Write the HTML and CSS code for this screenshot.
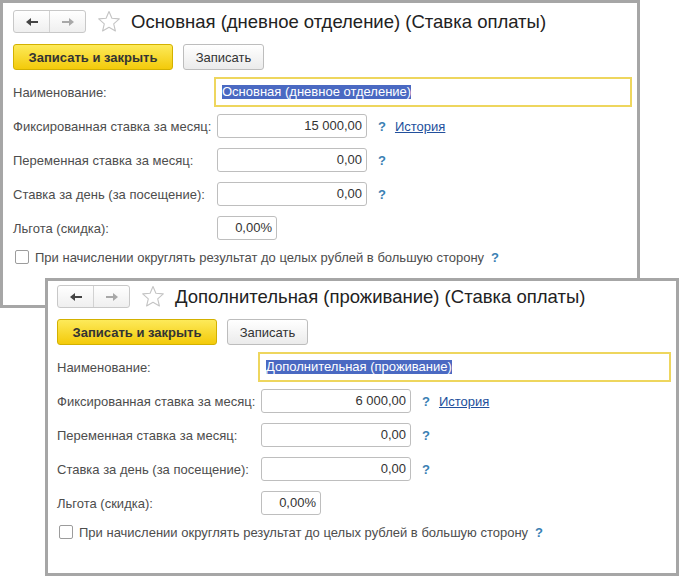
FILE: index.html
```html
<!DOCTYPE html>
<html lang="ru">
<head>
    <meta charset="UTF-8">
    <title>Ставки оплаты</title>
    <link rel="stylesheet" href="styles.css">
</head>
<body>

<div class="desk">

    <!-- Первое окно: основная ставка -->
    <section class="window window-back">
        <div class="head">
            <div class="nav">
                <span class="nav-btn">
                    <svg width="14" height="10" viewBox="0 0 14 10"><path d="M1 5 L6 1 L6 4 L13 4 L13 6 L6 6 L6 9 Z" fill="#444"/></svg>
                </span>
                <span class="nav-btn">
                    <svg width="14" height="10" viewBox="0 0 14 10"><path d="M13 5 L8 1 L8 4 L1 4 L1 6 L8 6 L8 9 Z" fill="#a8a8a8"/></svg>
                </span>
            </div>
            <svg class="star" width="24" height="23" viewBox="0 0 24 23"><path d="M12 1.5 L14.9 8.3 L22.3 8.9 L16.7 13.8 L18.4 21 L12 17.2 L5.6 21 L7.3 13.8 L1.7 8.9 L9.1 8.3 Z" fill="#fff" stroke="#c4c4c4" stroke-width="1.1" stroke-linejoin="round"/></svg>
            <h1 class="title">Основная (дневное отделение) (Ставка оплаты)</h1>
        </div>

        <div class="toolbar">
            <button class="btn btn-main">Записать и закрыть</button>
            <button class="btn">Записать</button>
        </div>

        <div class="row name-row">
            <span class="label">Наименование:</span>
            <div class="name-field"><span class="selected">Основная (дневное отделение)</span></div>
        </div>

        <div class="row rate-row">
            <span class="label">Фиксированная ставка за месяц:</span>
            <div class="num">15 000,00</div>
            <span class="hint">?</span>
            <a class="link" href="#">История</a>
        </div>
        <div class="row rate-row">
            <span class="label">Переменная ставка за месяц:</span>
            <div class="num">0,00</div>
            <span class="hint">?</span>
        </div>
        <div class="row rate-row">
            <span class="label">Ставка за день (за посещение):</span>
            <div class="num">0,00</div>
            <span class="hint">?</span>
        </div>
        <div class="row rate-row">
            <span class="label">Льгота (скидка):</span>
            <div class="num num-short">0,00%</div>
        </div>

        <div class="row check-row">
            <span class="check"></span>
            <span class="check-text">При начислении округлять результат до целых рублей в большую сторону</span>
            <span class="hint">?</span>
        </div>
    </section>

    <!-- Второе окно: дополнительная ставка -->
    <section class="window window-front">
        <div class="head">
            <div class="nav">
                <span class="nav-btn">
                    <svg width="14" height="10" viewBox="0 0 14 10"><path d="M1 5 L6 1 L6 4 L13 4 L13 6 L6 6 L6 9 Z" fill="#444"/></svg>
                </span>
                <span class="nav-btn">
                    <svg width="14" height="10" viewBox="0 0 14 10"><path d="M13 5 L8 1 L8 4 L1 4 L1 6 L8 6 L8 9 Z" fill="#a8a8a8"/></svg>
                </span>
            </div>
            <svg class="star" width="24" height="23" viewBox="0 0 24 23"><path d="M12 1.5 L14.9 8.3 L22.3 8.9 L16.7 13.8 L18.4 21 L12 17.2 L5.6 21 L7.3 13.8 L1.7 8.9 L9.1 8.3 Z" fill="#fff" stroke="#c4c4c4" stroke-width="1.1" stroke-linejoin="round"/></svg>
            <h1 class="title">Дополнительная (проживание) (Ставка оплаты)</h1>
        </div>

        <div class="toolbar">
            <button class="btn btn-main">Записать и закрыть</button>
            <button class="btn">Записать</button>
        </div>

        <div class="row name-row">
            <span class="label">Наименование:</span>
            <div class="name-field"><span class="selected">Дополнительная (проживание)</span></div>
        </div>

        <div class="row rate-row">
            <span class="label">Фиксированная ставка за месяц:</span>
            <div class="num">6 000,00</div>
            <span class="hint">?</span>
            <a class="link" href="#">История</a>
        </div>
        <div class="row rate-row">
            <span class="label">Переменная ставка за месяц:</span>
            <div class="num">0,00</div>
            <span class="hint">?</span>
        </div>
        <div class="row rate-row">
            <span class="label">Ставка за день (за посещение):</span>
            <div class="num">0,00</div>
            <span class="hint">?</span>
        </div>
        <div class="row rate-row">
            <span class="label">Льгота (скидка):</span>
            <div class="num num-short">0,00%</div>
        </div>

        <div class="row check-row">
            <span class="check"></span>
            <span class="check-text">При начислении округлять результат до целых рублей в большую сторону</span>
            <span class="hint">?</span>
        </div>
    </section>

</div>

</body>
</html>
```

FILE: styles.css
```css
/* Общие настройки */
body {
    margin: 0;
    font-family: "Liberation Sans", Arial, sans-serif;
    font-size: 13px;
    color: #4d4d4d;
    background: #fff;
}

.desk {
    position: relative;
    width: 685px;
    height: 581px;
    overflow: hidden;
}

/* Окна формы */
.window {
    position: absolute;
    box-sizing: border-box;
    background: #fff;
    border: 3px solid #a6a6a6;
    padding: 4px 5px 0 9px;
}

.window-back {
    left: 0;
    top: 0;
    width: 640px;
    height: 308px;
    padding-top: 7px;
    padding-left: 10px;
}

.window-front {
    left: 45px;
    top: 278px;
    width: 634px;
    height: 298px;
}

/* Заголовок окна */
.head {
    display: flex;
    align-items: center;
    height: 23px;
}

.nav {
    display: flex;
    width: 73px;
    height: 23px;
    box-sizing: border-box;
    border: 1px solid #c8c8c8;
    border-radius: 3px;
    background: linear-gradient(#ffffff, #efefef);
}

.nav-btn {
    flex: 1;
    display: flex;
    align-items: center;
    justify-content: center;
}

.nav-btn + .nav-btn {
    border-left: 1px solid #d2d2d2;
}

.star {
    margin-left: 11px;
}

.title {
    margin: 0 0 0 10px;
    font-size: 18.5px;
    font-weight: normal;
    color: #222;
    white-space: nowrap;
}

/* Кнопки командной панели */
.toolbar {
    display: flex;
    gap: 10px;
    margin-top: 11px;
}

.btn {
    width: 81px;
    height: 26px;
    box-sizing: border-box;
    padding: 0;
    border: 1px solid #bdbdbd;
    border-radius: 3px;
    background: linear-gradient(#ffffff, #ebebeb);
    font-family: "Liberation Sans", Arial, sans-serif;
    font-size: 13px;
    color: #333;
}

.btn-main {
    width: 160px;
    border-color: #d3b100;
    background: linear-gradient(#fdea5a, #f3ca0a);
    font-weight: bold;
}

/* Строки реквизитов */
.row {
    display: flex;
    align-items: center;
}

.label {
    flex: none;
    width: 204px;
}

.name-row {
    margin-top: 7px;
    height: 30px;
}

.name-field {
    flex: 1;
    margin-left: -3px;
    height: 30px;
    box-sizing: border-box;
    border: 2px solid #eed65e;
    padding-left: 6px;
    display: flex;
    align-items: center;
    color: #333;
}

.selected {
    background: #4a69c2;
    color: #fff;
    line-height: 14px;
}

.rate-row {
    margin-top: 10px;
    height: 24px;
}

.name-row + .rate-row {
    margin-top: 7px;
}

.num {
    width: 150px;
    height: 24px;
    box-sizing: border-box;
    border: 1px solid #bebebe;
    border-radius: 3px;
    padding-right: 4px;
    text-align: right;
    line-height: 22px;
    color: #333;
}

.num-short {
    width: 60px;
}

.hint {
    margin-left: 11px;
    color: #3a80b3;
    font-weight: bold;
}

.link {
    margin-left: 9px;
    color: #22509c;
    text-decoration: underline;
}

/* Флажок округления */
.check-row {
    margin-top: 9px;
    height: 16px;
}

.check {
    width: 14px;
    height: 14px;
    box-sizing: border-box;
    margin-left: 2px;
    border: 1px solid #9c9c9c;
    border-radius: 2px;
    background: #fff;
}

.check-text {
    margin-left: 6px;
}

.check-row .hint {
    margin-left: 7px;
}
```
